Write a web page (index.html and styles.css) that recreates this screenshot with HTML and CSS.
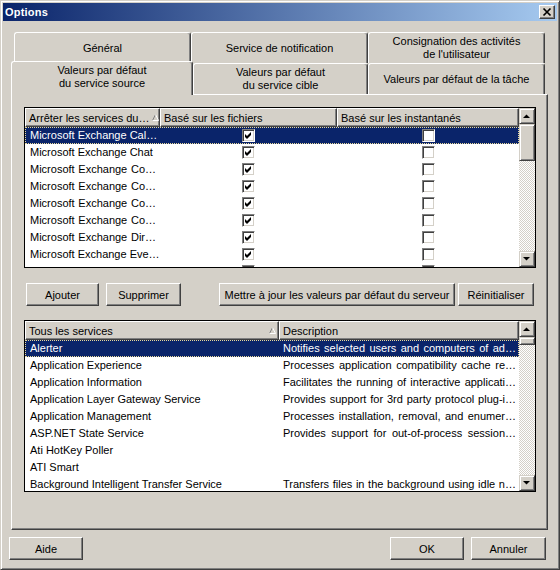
FILE: index.html
```html
<!DOCTYPE html>
<html>
<head>
<meta charset="utf-8">
<link rel="stylesheet" href="styles.css">
</head>
<body>
<div class="window">
  <div class="titlebar">
    <span class="title">Options</span>
    <span class="close-btn"><svg width="14" height="12" viewBox="0 0 14 12"><path d="M3.5 2.5 L10.5 9.5 M10.5 2.5 L3.5 9.5" stroke="#000" stroke-width="1.7" fill="none"/></svg></span>
  </div>
  <div class="client">
    <div class="tabs">
      <div class="tab-row back">
        <div class="tab w177">Général</div>
        <div class="tab w177">Service de notification</div>
        <div class="tab w177">Consignation des activités<br>de l'utilisateur</div>
      </div>
      <div class="tab-row front">
        <div class="tab selected">Valeurs par défaut<br>du service source</div>
        <div class="tab w175">Valeurs par défaut<br>du service cible</div>
        <div class="tab w177">Valeurs par défaut de la tâche</div>
      </div>
    </div>
    <div class="panel">
      <div class="list l1">
        <div class="lv">
          <div class="lv-head">
            <div class="hc"><span class="htext just">Arrêter les services du…</span><svg class="sort" width="8" height="7" viewBox="0 0 8 7"><path d="M0.5 6.5 L3.5 0.5" stroke="#808080" fill="none"/><path d="M3.5 0.5 L6.5 6.5 L0.5 6.5" stroke="#fff" fill="none"/></svg></div>
            <div class="hc">Basé sur les fichiers</div>
            <div class="hc">Basé sur les instantanés</div>
          </div>
          <div class="lv-row sel"><div class="c just">Microsoft Exchange Cal…</div><div class="c chk"><span class="cb"><svg width="11" height="11" viewBox="0 0 11 11"><polygon points="2,4 4,6 8,2 8,5 4,9 2,7" fill="#000"/></svg></span></div><div class="c chk"><span class="cb"></span></div></div>
          <div class="lv-row"><div class="c">Microsoft Exchange Chat</div><div class="c chk"><span class="cb"><svg width="11" height="11" viewBox="0 0 11 11"><polygon points="2,4 4,6 8,2 8,5 4,9 2,7" fill="#000"/></svg></span></div><div class="c chk"><span class="cb"></span></div></div>
          <div class="lv-row"><div class="c just">Microsoft Exchange Co…</div><div class="c chk"><span class="cb"><svg width="11" height="11" viewBox="0 0 11 11"><polygon points="2,4 4,6 8,2 8,5 4,9 2,7" fill="#000"/></svg></span></div><div class="c chk"><span class="cb"></span></div></div>
          <div class="lv-row"><div class="c just">Microsoft Exchange Co…</div><div class="c chk"><span class="cb"><svg width="11" height="11" viewBox="0 0 11 11"><polygon points="2,4 4,6 8,2 8,5 4,9 2,7" fill="#000"/></svg></span></div><div class="c chk"><span class="cb"></span></div></div>
          <div class="lv-row"><div class="c just">Microsoft Exchange Co…</div><div class="c chk"><span class="cb"><svg width="11" height="11" viewBox="0 0 11 11"><polygon points="2,4 4,6 8,2 8,5 4,9 2,7" fill="#000"/></svg></span></div><div class="c chk"><span class="cb"></span></div></div>
          <div class="lv-row"><div class="c just">Microsoft Exchange Co…</div><div class="c chk"><span class="cb"><svg width="11" height="11" viewBox="0 0 11 11"><polygon points="2,4 4,6 8,2 8,5 4,9 2,7" fill="#000"/></svg></span></div><div class="c chk"><span class="cb"></span></div></div>
          <div class="lv-row"><div class="c just">Microsoft Exchange Dir…</div><div class="c chk"><span class="cb"><svg width="11" height="11" viewBox="0 0 11 11"><polygon points="2,4 4,6 8,2 8,5 4,9 2,7" fill="#000"/></svg></span></div><div class="c chk"><span class="cb"></span></div></div>
          <div class="lv-row"><div class="c just">Microsoft Exchange Eve…</div><div class="c chk"><span class="cb"><svg width="11" height="11" viewBox="0 0 11 11"><polygon points="2,4 4,6 8,2 8,5 4,9 2,7" fill="#000"/></svg></span></div><div class="c chk"><span class="cb"></span></div></div>
          <div class="lv-row"><div class="c just">Microsoft Exchange IM…</div><div class="c chk"><span class="cb"><svg width="11" height="11" viewBox="0 0 11 11"><polygon points="2,4 4,6 8,2 8,5 4,9 2,7" fill="#000"/></svg></span></div><div class="c chk"><span class="cb"></span></div></div>
        </div>
        <div class="vscroll">
          <div class="sb-btn"><svg width="14" height="14" viewBox="0 0 14 14"><polygon points="3,9 10,9 6.5,5.5" fill="#000"/></svg></div>
          <div class="sb-thumb t1"></div>
          <div class="sb-track"></div>
          <div class="sb-btn"><svg width="14" height="14" viewBox="0 0 14 14"><polygon points="3,5 10,5 6.5,8.5" fill="#000"/></svg></div>
        </div>
      </div>

      <div class="btn-row">
        <div class="btn b-add">Ajouter</div>
        <div class="btn b-del">Supprimer</div>
        <div class="btn b-upd">Mettre à jour les valeurs par défaut du serveur</div>
        <div class="btn b-rst">Réinitialiser</div>
      </div>

      <div class="list l2">
        <div class="lv">
          <div class="lv-head">
            <div class="hc"><span class="htext">Tous les services</span><svg class="sort s2" width="8" height="7" viewBox="0 0 8 7"><path d="M0.5 6.5 L3.5 0.5" stroke="#808080" fill="none"/><path d="M3.5 0.5 L6.5 6.5 L0.5 6.5" stroke="#fff" fill="none"/></svg></div>
            <div class="hc">Description</div>
          </div>
          <div class="lv-row sel"><div class="c">Alerter</div><div class="c d just">Notifies selected users and computers of ad…</div></div>
          <div class="lv-row"><div class="c">Application Experience</div><div class="c d just">Processes application compatibility cache re…</div></div>
          <div class="lv-row"><div class="c">Application Information</div><div class="c d just">Facilitates the running of interactive applicati…</div></div>
          <div class="lv-row"><div class="c">Application Layer Gateway Service</div><div class="c d just">Provides support for 3rd party protocol plug-i…</div></div>
          <div class="lv-row"><div class="c">Application Management</div><div class="c d just">Processes installation, removal, and enumer…</div></div>
          <div class="lv-row"><div class="c">ASP.NET State Service</div><div class="c d just">Provides support for out-of-process session…</div></div>
          <div class="lv-row"><div class="c">Ati HotKey Poller</div><div class="c d"></div></div>
          <div class="lv-row"><div class="c">ATI Smart</div><div class="c d"></div></div>
          <div class="lv-row"><div class="c">Background Intelligent Transfer Service</div><div class="c d just">Transfers files in the background using idle n…</div></div>
        </div>
        <div class="vscroll">
          <div class="sb-btn"><svg width="14" height="14" viewBox="0 0 14 14"><polygon points="3,9 10,9 6.5,5.5" fill="#000"/></svg></div>
          <div class="sb-thumb t2"></div>
          <div class="sb-track"></div>
          <div class="sb-btn"><svg width="14" height="14" viewBox="0 0 14 14"><polygon points="3,5 10,5 6.5,8.5" fill="#000"/></svg></div>
        </div>
      </div>
    </div>
  </div>
  <div class="footer">
    <div class="btn b-help">Aide</div>
    <div class="btn b-ok">OK</div>
    <div class="btn b-cancel">Annuler</div>
  </div>
</div>
</body>
</html>
```
FILE: styles.css
```css
* { box-sizing: border-box; }
html, body { margin: 0; padding: 0; background: #D4D0C8; }
body {
  font-family: "Liberation Sans", Arial, sans-serif;
  font-size: 11px;
  color: #000;
}
svg { display: block; }

.window {
  width: 560px;
  height: 570px;
  border: 1px solid;
  border-color: #D4D0C8 #404040 #404040 #D4D0C8;
  box-shadow: inset 1px 1px #fff, inset -1px -1px #808080;
  padding: 2px;
  background: #D4D0C8;
}

.titlebar {
  height: 18px;
  background: linear-gradient(to right, #0A246A, #A6CAF0);
  display: flex;
  align-items: center;
  justify-content: space-between;
  padding: 0 2px;
}
.title {
  color: #fff;
  font-weight: bold;
  font-size: 11px;
  letter-spacing: 0.2px;
}
.close-btn {
  width: 16px;
  height: 14px;
  border: 1px solid;
  border-color: #fff #404040 #404040 #fff;
  box-shadow: inset -1px -1px #808080;
  background: #D4D0C8;
}

.client { padding: 0 9px 0 8px; }

.tabs { margin-top: 11px; }
.tab-row { display: flex; height: 31px; align-items: flex-start; }
.tab-row.back { padding-left: 3px; }
.tab {
  height: 31px;
  display: flex;
  align-items: center;
  justify-content: center;
  text-align: center;
  line-height: 13px;
  border-top: 1px solid #fff;
  border-left: 1px solid #fff;
  border-right: 1px solid #404040;
  box-shadow: inset -1px 0 #808080;
  border-radius: 3px 3px 0 0;
  background: #D4D0C8;
  white-space: nowrap;
}
.w177 { width: 177px; }
.w175 { width: 175px; }
.tab.selected {
  width: 182px;
  height: 34px;
  margin-top: -2px;
  padding-bottom: 4px;
  z-index: 1;
}

.panel {
  height: 436px;
  border: 1px solid;
  border-color: #fff #404040 #404040 #fff;
  box-shadow: inset -1px -1px #808080;
  padding: 12px 11px 0 12px;
}

.list {
  border: 1px solid #000;
  background: #fff;
  display: flex;
}
.l1 { height: 161px; }
.l2 { height: 172px; margin-top: 14px; }

.lv {
  flex: 1;
  overflow: hidden;
  display: flex;
  flex-direction: column;
}
.lv-head, .lv-row { display: grid; flex-shrink: 0; }
.l1 .lv-head, .l1 .lv-row { grid-template-columns: 135px 177px 182px; }
.l2 .lv-head, .l2 .lv-row { grid-template-columns: 254px 240px; }
.lv-head { height: 19px; }
.hc {
  border: 1px solid;
  border-color: #fff #404040 #404040 #fff;
  box-shadow: inset -1px -1px #808080;
  background: #D4D0C8;
  padding-left: 3px;
  display: flex;
  align-items: center;
  white-space: nowrap;
  overflow: hidden;
}
.htext { flex: 1; }
.sort { margin: 0 2px 0 3px; flex-shrink: 0; }
.s2 { margin-right: 1px; }

.lv-row { height: 17px; line-height: 17px; }
.c {
  padding-left: 5px;
  white-space: nowrap;
  overflow: hidden;
}
.c.d { padding-left: 4px; padding-right: 3px; }
.just { text-align: justify; text-align-last: justify; }
.l1 .c.just { padding-right: 4px; }
.c.chk {
  padding: 0;
  display: flex;
  justify-content: center;
  align-items: center;
}
.sel {
  background: #0A246A;
  color: #fff;
  outline: 1px dotted #e8d89a;
  outline-offset: -1px;
}
.cb {
  width: 13px;
  height: 13px;
  border: 1px solid;
  border-color: #808080 #fff #fff #808080;
  box-shadow: inset 1px 1px #404040, inset -1px -1px #D4D0C8;
  background: #fff;
}

.vscroll {
  width: 16px;
  display: flex;
  flex-direction: column;
  flex-shrink: 0;
}
.sb-btn, .sb-thumb {
  border: 1px solid;
  border-color: #D4D0C8 #404040 #404040 #D4D0C8;
  box-shadow: inset 1px 1px #fff, inset -1px -1px #808080;
  background: #D4D0C8;
  flex-shrink: 0;
}
.sb-btn { height: 16px; }
.sb-thumb.t1 { height: 37px; }
.sb-thumb.t2 { height: 8px; }
.sb-track {
  flex: 1;
  background: repeating-conic-gradient(#fff 0 25%, #D4D0C8 0 50%) 0 0 / 2px 2px;
}

.btn {
  height: 23px;
  border: 1px solid;
  border-color: #fff #404040 #404040 #fff;
  box-shadow: inset -1px -1px #808080;
  background: #D4D0C8;
  display: flex;
  align-items: center;
  justify-content: center;
  white-space: nowrap;
}
.btn-row { display: flex; margin-top: 15px; }
.b-add { width: 73px; margin-left: 2px; }
.b-del { width: 75px; margin-left: 7px; }
.b-upd { width: 236px; margin-left: 38px; }
.b-rst { width: 76px; margin-left: 3px; }

.footer {
  display: flex;
  margin-top: 7px;
  padding: 0 11px 0 6px;
}
.b-help { width: 74px; }
.b-ok { width: 74px; margin-left: auto; }
.b-cancel { width: 75px; margin-left: 7px; }
```
